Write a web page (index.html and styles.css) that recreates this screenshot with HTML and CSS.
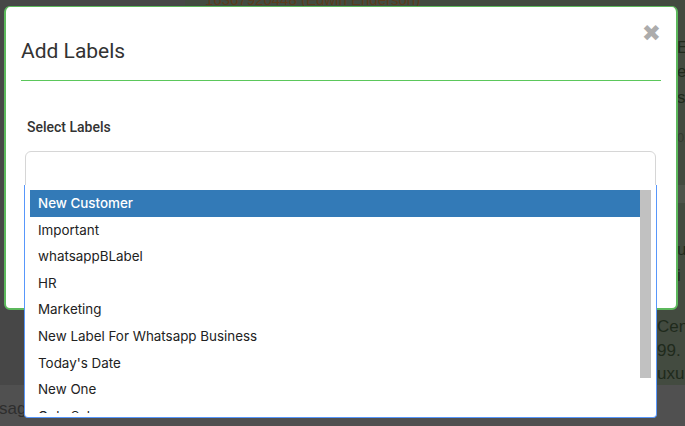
FILE: index.html
```html
<!DOCTYPE html>
<html>
<head>
<meta charset="utf-8">
<link rel="stylesheet" href="styles.css">
</head>
<body>
<div class="page">
  <div class="side"></div>
  <div class="main">
    <div class="topline">16367920448 (Edwin Enderson)</div>
    <div class="rtext t1">Ex</div>
    <div class="rtext t2">er</div>
    <div class="rtext t3">s</div>
    <div class="rtext t4">02</div>
    <div class="band"></div>
    <div class="rtext t5">u</div>
    <div class="rtext t6">i</div>
    <div class="rtext t7">Cen</div>
    <div class="rtext t8">99.</div>
    <div class="rtext t9">uxu</div>
  </div>
  <div class="footer"><span class="msg">Message</span></div>
</div>

<div class="modal">
  <div class="modal-head">
    <h2 class="modal-title">Add Labels</h2>
    <span class="close">&#x2716;</span>
  </div>
  <div class="modal-body">
    <label class="field-label">Select Labels</label>
    <div class="input-box"></div>
  </div>
</div>

<div class="dropdown">
  <ul class="results">
    <li class="active">New Customer</li>
    <li>Important</li>
    <li>whatsappBLabel</li>
    <li>HR</li>
    <li>Marketing</li>
    <li>New Label For Whatsapp Business</li>
    <li>Today's Date</li>
    <li>New One</li>
    <li>Only Sales</li>
    <li>Support</li>
  </ul>
  <div class="scrollbar"><div class="thumb"></div></div>
</div>
</body>
</html>
```

FILE: styles.css
```css
html, body {
  margin: 0;
  padding: 0;
  width: 685px;
  height: 426px;
  overflow: hidden;
  background: #4a4a4a;
  font-family: "Liberation Sans", Arial, sans-serif;
}

.page {
  position: relative;
  width: 685px;
  height: 426px;
  display: grid;
  grid-template-columns: 185px 1fr;
  grid-template-rows: 385px 41px;
}

.side { background: #474747; }

.main {
  position: relative;
  background: #434b40;
}

.topline {
  position: absolute;
  left: 20px;
  top: -9px;
  font-size: 15px;
  color: #5b3c1d;
  font-family: "Liberation Sans", Arial, sans-serif;
}

.rtext {
  position: absolute;
  left: 492px;
  font-size: 17px;
  color: #1f2a1c;
  font-family: "Liberation Sans", Arial, sans-serif;
}
.t1 { top: 38px; }
.t2 { top: 62px; }
.t3 { top: 88px; }
.t4 { top: 130px; font-size: 13px; color: #333a30; }
.band { position: absolute; left: 485px; right: 0; top: 185px; height: 18px; background: #4e544b; }
.t5 { top: 240px; }
.t6 { top: 266px; }
.t7 { top: 317px; left: 472px; }
.t8 { top: 341px; left: 472px; }
.t9 { top: 364px; left: 472px; }

.footer {
  grid-column: 1 / 3;
  background: #505050;
  position: relative;
}
.msg {
  position: absolute;
  left: -33px;
  top: 14px;
  font-size: 17px;
  color: #2e2e2e;
}

.modal {
  position: absolute;
  left: 4px;
  top: 6px;
  width: 670px;
  height: 301px;
  background: #fff;
  border: 2px solid #5cb85c;
  border-top-width: 1px;
  border-radius: 6px;
  box-sizing: content-box;
}

.modal-head {
  position: relative;
  margin: 0 15px 0 15px;
  padding: 32px 0 0 0;
  height: 41px;
  border-bottom: 1px solid #5bc75b;
}

.modal-title {
  margin: 0;
  font-family: Roboto, "Liberation Sans", sans-serif;
  font-weight: 400;
  font-size: 21px;
  line-height: 24px;
  color: #333;
}

.close {
  position: absolute;
  right: 0;
  top: 13px;
  font-size: 23px;
  line-height: 26px;
  color: #acacac;
  font-family: "DejaVu Sans", sans-serif;
  font-weight: bold;
}

.modal-body {
  padding: 38px 20px 0 19px;
}

.field-label {
  display: block;
  font-family: Roboto, "Liberation Sans", sans-serif;
  font-weight: 500;
  font-size: 14px;
  color: #333;
  margin-left: 2px;
}

.input-box {
  margin-top: 16px;
  height: 40px;
  border: 1px solid #d6d6d6;
  border-radius: 6px;
}

.dropdown {
  position: absolute;
  left: 24px;
  top: 185px;
  width: 633px;
  height: 233px;
  background: #fff;
  border: 1px solid #5897fb;
  border-top: none;
  border-radius: 0 0 4px 4px;
  padding: 5px;
  box-sizing: border-box;
  display: flex;
}

.results {
  flex: 1;
  list-style: none;
  margin: 0;
  padding: 0;
  height: 223px;
  overflow: hidden;
  font-family: Inter, "Liberation Sans", sans-serif;
  font-size: 13.4px;
  color: #222;
}

.scrollbar {
  width: 11px;
  height: 223px;
  background: #fff;
}
.thumb {
  height: 188px;
  background: #c1c1c1;
}

.results li {
  height: 26.6px;
  line-height: 26.6px;
  padding-left: 8px;
  white-space: nowrap;
}
.results li.active {
  background: #337ab7;
  color: #fff;
  font-weight: 500;
}
```
